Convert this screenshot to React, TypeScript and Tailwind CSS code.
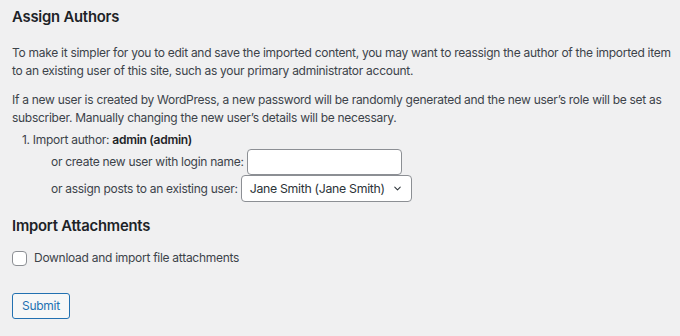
import { ChevronDown } from "lucide-react";

export default function App() {
  return (
    <main className="min-h-[336px] bg-[#f0f0f1] px-3 pt-[6px] font-['Inter',_sans-serif] text-[12px] leading-[18px] tracking-[-0.28px] text-[#3c434a]">
      <h2 className="text-[14.8px] font-semibold leading-[22px] tracking-[-0.2px] text-[#1d2327]">Assign Authors</h2>

      <p className="mt-[16px] w-[664px]">
        To make it simpler for you to edit and save the imported content, you may want to reassign the author of the
        imported item to an existing user of this site, such as your primary administrator account.
      </p>
      <p className="mt-[11px] w-[664px]">
        If a new user is created by WordPress, a new password will be randomly generated and the new user’s role will be
        set as subscriber. Manually changing the new user’s details will be necessary.
      </p>

      <ol className="mt-[4px] pl-[10px]">
        <li>
          <div>
            1. Import author: <strong className="font-semibold text-[#1d2327]">admin (admin)</strong>
          </div>
          <div className="flex flex-col pl-[29px]">
            <label className="flex items-center gap-[3px]">
              <span>or create new user with login name:</span>
              <input
                type="text"
                className="h-[26px] w-[155px] rounded-[4px] border border-[#8c8f94] bg-white px-2 outline-none"
              />
            </label>
            <label className="flex items-center gap-[3px]">
              <span>or assign posts to an existing user:</span>
              <div className="flex h-[27px] w-[171px] items-center justify-between whitespace-nowrap rounded-[4px] border border-[#8c8f94] bg-white pl-[8px] pr-[8px] text-[12.3px] tracking-[-0.3px] text-[#2c3338]">
                <span>Jane Smith (Jane Smith)</span>
                <ChevronDown className="h-[11px] w-[11px] text-[#2c3338]" strokeWidth={2.2} />
              </div>
            </label>
          </div>
        </li>
      </ol>

      <h2 className="mt-[13px] text-[14.8px] font-semibold leading-[22px] tracking-[-0.2px] text-[#1d2327]">
        Import Attachments
      </h2>

      <label className="mt-[12px] flex items-center gap-[7px]">
        <span className="h-[15px] w-[15px] rounded-[4px] border border-[#8c8f94] bg-white" />
        <span>Download and import file attachments</span>
      </label>

      <button
        type="button"
        className="mt-[26px] h-[26px] rounded-[3px] border border-[#2271b1] bg-[#f6f7f7] px-[9px] text-[12px] text-[#2271b1]"
      >
        Submit
      </button>
    </main>
  );
}
